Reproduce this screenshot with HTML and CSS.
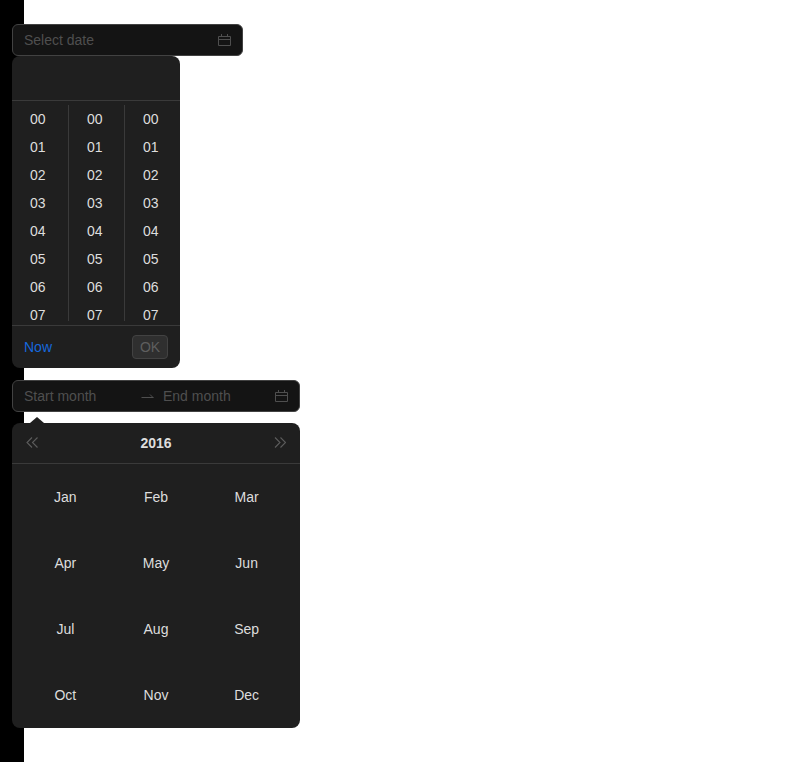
FILE: index.html
```html
<!DOCTYPE html>
<html lang="en">
<head>
<meta charset="utf-8">
<title>Date pickers</title>
<link rel="stylesheet" href="styles.css">
</head>
<body>
<main class="page">
  <div class="field field-date">
    <span class="placeholder grow">Select date</span>
    <svg class="cal" viewBox="0 0 13 14"><path d="M.5 3.500h12v9H.5zM.5 6.500h12M3.500 1v3M9.500 1v3" fill="none" stroke="currentColor"/></svg>
  </div>
  <section class="time-panel">
    <div class="time-head"></div>
    <div class="time-cols">
      <ul class="col"><li>00</li><li>01</li><li>02</li><li>03</li><li>04</li><li>05</li><li>06</li><li>07</li></ul>
      <ul class="col"><li>00</li><li>01</li><li>02</li><li>03</li><li>04</li><li>05</li><li>06</li><li>07</li></ul>
      <ul class="col"><li>00</li><li>01</li><li>02</li><li>03</li><li>04</li><li>05</li><li>06</li><li>07</li></ul>
    </div>
    <div class="time-foot">
      <a class="now">Now</a>
      <span class="ok">OK</span>
    </div>
  </section>
  <div class="field field-range">
    <span class="placeholder range-start">Start month</span>
    <svg class="sep" viewBox="0 0 13 14"><path d="M.5 8.500h12M9 5.500l3 3" fill="none" stroke="currentColor"/></svg>
    <span class="placeholder grow">End month</span>
    <svg class="cal" viewBox="0 0 13 14"><path d="M.5 3.500h12v9H.5zM.5 6.500h12M3.500 1v3M9.500 1v3" fill="none" stroke="currentColor"/></svg>
  </div>
  <section class="month-panel">
    <span class="arrow"></span>
    <header class="month-head">
      <svg class="dbl" viewBox="0 0 12 12"><path d="M6 .5l-5 5 5 5M11.500 .5l-5 5 5 5" fill="none" stroke="currentColor" stroke-width="1.100"/></svg>
      <strong class="year">2016</strong>
      <svg class="dbl" viewBox="0 0 12 12"><path d="M1 .5l5 5-5 5M6.500 .5l5 5-5 5" fill="none" stroke="currentColor" stroke-width="1.100"/></svg>
    </header>
    <div class="months">
      <span>Jan</span><span>Feb</span><span>Mar</span>
      <span>Apr</span><span>May</span><span>Jun</span>
      <span>Jul</span><span>Aug</span><span>Sep</span>
      <span>Oct</span><span>Nov</span><span>Dec</span>
    </div>
  </section>
</main>
</body>
</html>
```
FILE: styles.css
```css
* { box-sizing: border-box; }
html, body { margin: 0; padding: 0; }
body { font: 14px/22px "Liberation Sans", Arial, sans-serif; }
.page {
  height: 762px;
  padding: 24px 0 0 12px;
  background: linear-gradient(90deg, #000 24px, #fff 24px);
  overflow: hidden;
}
.field {
  display: flex;
  align-items: center;
  height: 32px;
  padding: 0 11px;
  background: #141414;
  border: 1px solid #424242;
  border-radius: 6px;
}
.field-date { width: 231px; }
.field-range { width: 288px; margin-top: 12px; }
.placeholder { color: #4f4f4f; }
.grow { flex: 1; }
.range-start { width: 117px; }
.cal { width: 13px; height: 14px; color: #4f4f4f; }
.sep { width: 13px; height: 14px; color: #4f4f4f; margin-right: 9px; }
.time-panel {
  width: 168px;
  height: 312px;
  background: #1f1f1f;
  border-radius: 8px;
  display: flex;
  flex-direction: column;
}
.time-head { height: 45px; border-bottom: 1px solid #3a3a3a; }
.time-cols {
  display: flex;
  height: 224px;
  padding-top: 4px;
  overflow: hidden;
}
.col {
  flex: 0 0 56px;
  height: 216px;
  margin: 0;
  padding: 0;
  list-style: none;
  color: #ddd;
}
.col + .col { border-left: 1px solid #3a3a3a; }
.col li { height: 28px; line-height: 28px; padding-left: 18px; }
.time-foot {
  flex: 1;
  display: flex;
  align-items: center;
  justify-content: space-between;
  padding: 0 12px;
  border-top: 1px solid #3a3a3a;
}
.now { color: #1668dc; }
.ok {
  width: 36px;
  height: 24px;
  line-height: 22px;
  text-align: center;
  color: #5e5e5e;
  background: #2f2f2f;
  border: 1px solid #424242;
  border-radius: 4px;
}
.month-panel {
  position: relative;
  width: 288px;
  margin-top: 11px;
  background: #1f1f1f;
  border-radius: 8px;
}
.arrow {
  position: absolute;
  left: 18px;
  top: -6px;
  width: 0;
  height: 0;
  border-left: 7px solid transparent;
  border-right: 7px solid transparent;
  border-bottom: 6px solid #1f1f1f;
}
.month-head {
  display: flex;
  align-items: center;
  justify-content: space-between;
  height: 41px;
  padding: 0 14px;
  border-bottom: 1px solid #3a3a3a;
  color: #5c5c5c;
}
.dbl { width: 12px; height: 12px; }
.year { color: #ddd; font-weight: 700; }
.months {
  display: grid;
  grid-template-columns: repeat(3, 1fr);
  grid-auto-rows: 66px;
  padding: 0 8px;
  color: #ddd;
}
.months span { display: flex; align-items: center; justify-content: center; }
```
